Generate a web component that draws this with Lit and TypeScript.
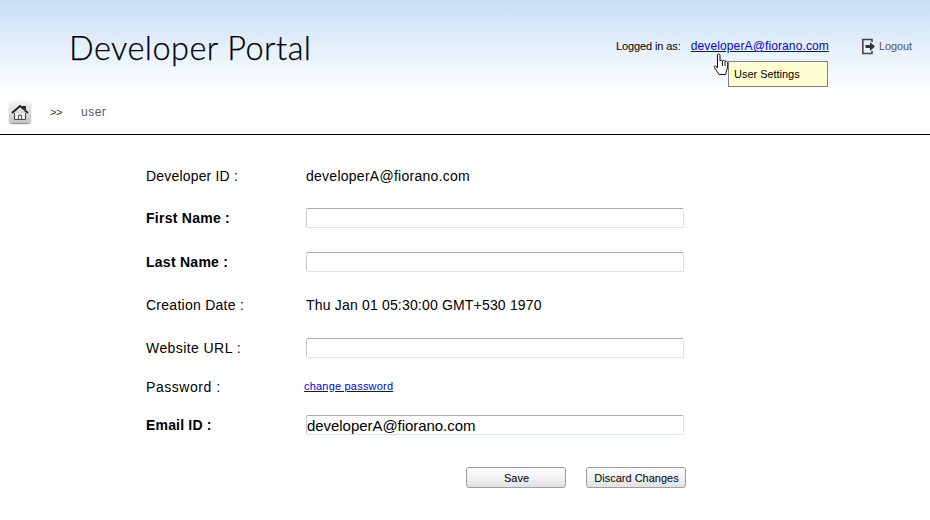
import { LitElement, html, css } from "lit";
import { customElement } from "lit/decorators.js";

@customElement("app-root")
export class AppRoot extends LitElement {
  static styles = css`
    :host { display: block; width: 930px; height: 520px; position: relative; background: #fff; font-family: "Liberation Sans", Arial, sans-serif; color: #000; overflow: hidden; }
    .top { height: 134px; border-bottom: 1px solid #000; background: linear-gradient(#c8dff5 0, #e6f1fb 50px, #fff 96px, #fff 100%); display: grid; grid-template-rows: 94px 40px; position: relative; }
    .head { display: flex; align-items: flex-start; padding-left: 69px; }
    .title { font-family: "Lato", sans-serif; font-weight: 300; font-size: 32.5px; line-height: 40px; margin-top: 28px; letter-spacing: .45px; white-space: nowrap; -webkit-text-stroke: .25px #000; }
    .user { margin-left: auto; display: flex; align-items: center; height: 16px; margin-top: 38px; }
    .logged { font-size: 11px; letter-spacing: -.1px; margin-right: 10px; }
    .mail { font-size: 12px; letter-spacing: .12px; color: #0000ee; text-decoration: underline; }
    .logout { display: flex; align-items: center; font-size: 11px; color: #555; letter-spacing: -.1px; margin-left: 33px; margin-right: 18px; gap: 3px; }
    .crumbs { display: flex; align-items: center; padding-left: 9px; height: 36px; }
    .home { width: 22px; height: 22px; border-radius: 3px; background: linear-gradient(#f4f4f4, #c4c4c4); box-shadow: 0 1px 1px #888; display: flex; align-items: center; justify-content: center; }
    .sep { font-size: 11px; color: #333; letter-spacing: -.4px; margin-left: 19px; width: 31px; }
    .page { font-size: 12px; color: #555570; letter-spacing: .5px; }
    .tip { position: absolute; left: 728px; top: 61px; width: 98px; height: 24px; border: 1px solid #808080; background: #ffffd2; font-size: 11px; letter-spacing: -.03px; line-height: 25px; text-indent: 5px; }
    .cursor { position: absolute; left: 713px; top: 53px; }
    .form { display: grid; grid-template-columns: 160px 380px; grid-template-rows: 42px 42px 46px 40px 46px 32px 44px; margin: 20px 0 0 146px; align-items: center; font-size: 14px; letter-spacing: .26px; }
    .b { font-weight: bold; }
    .tight { letter-spacing: .18px; }
    .wide { letter-spacing: .42px; }
    .wider { letter-spacing: .55px; }
    input { box-sizing: border-box; width: 378px; height: 20px; border: 1px solid #dfe3ea; border-top-color: #aaa; border-left-color: #c8c8c8; border-radius: 2px; padding: 0; background: #fff; font: 15px "Liberation Sans", Arial, sans-serif; letter-spacing: -.05px; color: #000; outline: none; margin: 0; display: block; }
    .link { font-size: 11px; letter-spacing: .2px; color: #0000ee; text-decoration: underline; margin-left: -2px; margin-top: -2px; }
    .actions { display: flex; gap: 20px; margin: 20px 0 0 466px; }
    button { box-sizing: border-box; height: 21px; border: 1px solid #a0a0a0; border-radius: 3px; background: linear-gradient(#fff, #e2e2e2); font: 11px "Liberation Sans", Arial, sans-serif; color: #000; padding: 0 0 0 1px; width: 100px; }
  `;

  render() {
    return html`
      <div class="top">
        <div class="head">
          <div class="title">Developer Portal</div>
          <div class="user">
            <span class="logged">Logged in as:</span>
            <a class="mail">developerA@fiorano.com</a>
            <span class="logout">
              <svg width="14" height="17" viewBox="0 0 14 17">
                <path d="M10 4V1.500H.8v14H10V13" fill="none" stroke="#444" stroke-width="1.600"/>
                <path d="M3.500 7H8V4l5 4.500L8 13v-3H3.500z" fill="#333"/>
              </svg>
              Logout
            </span>
          </div>
        </div>
        <div class="crumbs">
          <span class="home">
            <svg width="18" height="17" viewBox="0 0 18 17">
              <path d="M1 9 9 2l3 2.600V3h2v3.400L17 9" fill="none" stroke="#222" stroke-width="1.800"/>
              <path d="M3.500 9v6.500h11V9" fill="#f0f0f0" stroke="#444"/>
              <path d="M7.500 15.500V11h3v4.500" fill="none" stroke="#555"/>
            </svg>
          </span>
          <span class="sep">&gt;&gt;</span>
          <span class="page">user</span>
        </div>
        <div class="tip">User Settings</div>
        <svg class="cursor" width="17" height="23" viewBox="0 0 17 23">
          <path d="M4.500 1.500c1-1 2.300-.6 2.500 .6V8c.8-1 2-.9 2.500 0 .8-.8 2-.6 2.500 .3 1-.6 2.400 0 2.500 1.200.2 3 .2 5.500-1 8.500l-1 3.500H6l-4.500-7C.6 13.500 2 12.300 3.500 13.500L4.500 15z" fill="#fff" stroke="#111" stroke-width="1" stroke-linejoin="round"/>
          <path d="M9.500 8v5M12 8.500v4.500" stroke="#111" stroke-width="1" fill="none"/>
        </svg>
      </div>
      <div class="form">
        <span class="tight">Developer ID :</span><span>developerA@fiorano.com</span>
        <span class="b">First Name :</span><input />
        <span class="b">Last Name :</span><input />
        <span>Creation Date :</span><span class="tight">Thu Jan 01 05:30:00 GMT+530 1970</span>
        <span class="wide">Website URL :</span><input />
        <span class="wider">Password :</span><a class="link">change password</a>
        <span class="b tight">Email ID :</span><input value="developerA@fiorano.com" />
      </div>
      <div class="actions">
        <button>Save</button>
        <button>Discard Changes</button>
      </div>
    `;
  }
}
